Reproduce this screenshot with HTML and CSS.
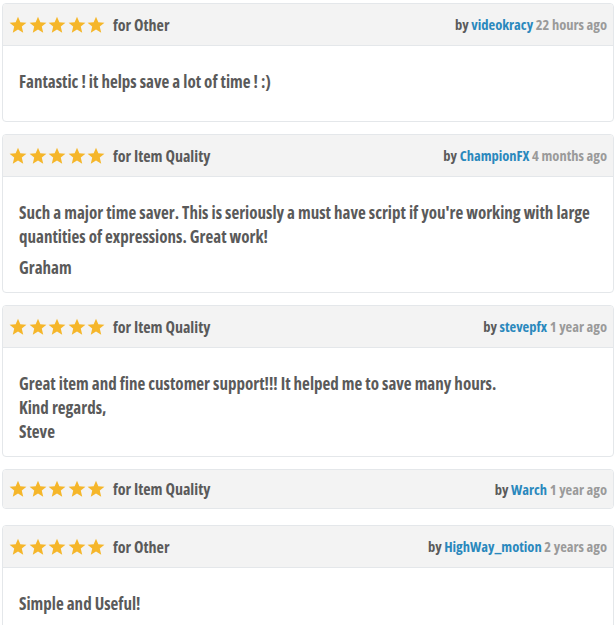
FILE: index.html
```html
<!DOCTYPE html>
<html lang="en">
<head>
  <meta charset="UTF-8">
  <title>Reviews</title>
  <link rel="stylesheet" href="styles.css">
</head>
<body>

  <svg width="0" height="0" class="defs">
    <symbol id="star" viewBox="0 0 20 20">
      <polygon points="10,0.8 12.6,7 19.4,7.4 14.2,11.8 15.8,18.6 10,14.9 4.2,18.6 5.8,11.8 0.6,7.4 7.4,7"/>
    </symbol>
  </svg>

  <div class="reviews">

    <div class="review review-first">
      <div class="review-head">
        <div class="rating">
          <span class="stars">
            <svg><use href="#star"/></svg><svg><use href="#star"/></svg><svg><use href="#star"/></svg><svg><use href="#star"/></svg><svg><use href="#star"/></svg>
          </span>
          <span class="reason">for Other</span>
        </div>
        <div class="meta">by <a href="#">videokracy</a> <span class="time">22 hours ago</span></div>
      </div>
      <div class="review-body">
        <p>Fantastic ! it helps save a lot of time ! :)</p>
      </div>
    </div>

    <div class="review">
      <div class="review-head">
        <div class="rating">
          <span class="stars">
            <svg><use href="#star"/></svg><svg><use href="#star"/></svg><svg><use href="#star"/></svg><svg><use href="#star"/></svg><svg><use href="#star"/></svg>
          </span>
          <span class="reason">for Item Quality</span>
        </div>
        <div class="meta">by <a href="#">ChampionFX</a> <span class="time">4 months ago</span></div>
      </div>
      <div class="review-body">
        <p>Such a major time saver. This is seriously a must have script if you're working with large quantities of expressions. Great work!</p>
        <p>Graham</p>
      </div>
    </div>

    <div class="review">
      <div class="review-head">
        <div class="rating">
          <span class="stars">
            <svg><use href="#star"/></svg><svg><use href="#star"/></svg><svg><use href="#star"/></svg><svg><use href="#star"/></svg><svg><use href="#star"/></svg>
          </span>
          <span class="reason">for Item Quality</span>
        </div>
        <div class="meta">by <a href="#">stevepfx</a> <span class="time">1 year ago</span></div>
      </div>
      <div class="review-body">
        <p>Great item and fine customer support!!! It helped me to save many hours.<br>Kind regards,<br>Steve</p>
      </div>
    </div>

    <div class="review review-short">
      <div class="review-head">
        <div class="rating">
          <span class="stars">
            <svg><use href="#star"/></svg><svg><use href="#star"/></svg><svg><use href="#star"/></svg><svg><use href="#star"/></svg><svg><use href="#star"/></svg>
          </span>
          <span class="reason">for Item Quality</span>
        </div>
        <div class="meta">by <a href="#">Warch</a> <span class="time">1 year ago</span></div>
      </div>
    </div>

    <div class="review">
      <div class="review-head">
        <div class="rating">
          <span class="stars">
            <svg><use href="#star"/></svg><svg><use href="#star"/></svg><svg><use href="#star"/></svg><svg><use href="#star"/></svg><svg><use href="#star"/></svg>
          </span>
          <span class="reason">for Other</span>
        </div>
        <div class="meta">by <a href="#">HighWay_motion</a> <span class="time">2 years ago</span></div>
      </div>
      <div class="review-body">
        <p>Simple and Useful!</p>
      </div>
    </div>

  </div>

</body>
</html>
```

FILE: styles.css
```css
body {
  margin: 0;
  background: #fff;
  font-family: "Open Sans", "DejaVu Sans Condensed", sans-serif;
  font-stretch: 75%;
  font-weight: bold;
  color: #5a5a5a;
  overflow: hidden;
}
.defs {
  position: absolute;
}
.reviews {
  padding: 3px 2px 0 2px;
  display: flex;
  flex-direction: column;
  gap: 12px;
}
.review {
  border: 1px solid #e4e7ea;
  border-radius: 4px;
  background: #fff;
}
.review-short {
  margin-bottom: 4px;
}
.review-head {
  background: #f3f3f3;
  height: 41px;
  display: flex;
  align-items: center;
  justify-content: space-between;
  padding: 0 6px 0 6px;
  border-radius: 4px 4px 0 0;
}
.review-short .review-head {
  height: 38px;
  border-radius: 4px;
}
.review-body {
  border-top: 1px solid #e4e7ea;
  padding: 24px 16px 12px 16px;
  font-size: 17px;
  line-height: 24px;
}
.review-first .review-body {
  min-height: 39px;
}
.review-body p {
  margin: 0 0 7px 0;
}
.review-body p:last-child {
  margin-bottom: 0;
}
.rating {
  display: flex;
  align-items: center;
}
.stars {
  display: flex;
  gap: 1.5px;
  margin-right: 8px;
}
.stars svg {
  width: 18px;
  height: 18px;
  fill: #f5b62a;
}
.reason {
  font-size: 16px;
  color: #5a5a5a;
}
.meta {
  font-size: 14.5px;
  color: #5a5a5a;
}
.meta a {
  color: #2a88bd;
  text-decoration: none;
}
.time {
  color: #9a9a9a;
}
```
